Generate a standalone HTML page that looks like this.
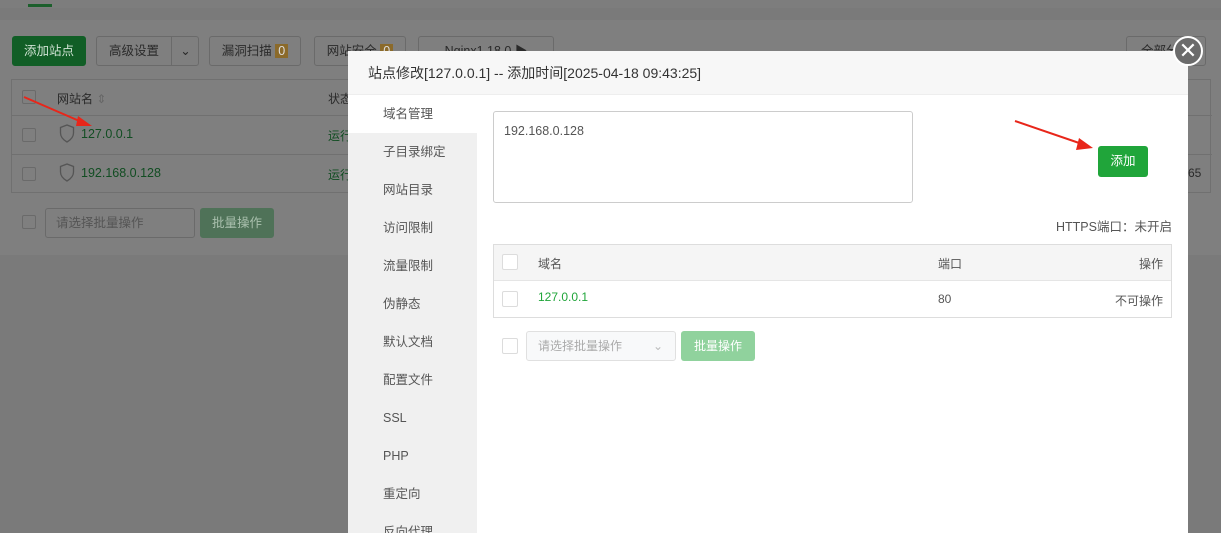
<!DOCTYPE html><html><head><meta charset="utf-8"><style>
*{box-sizing:border-box;margin:0;padding:0}
html{width:1221px;height:533px;overflow:hidden}
body{width:1221px;height:533px;overflow:hidden;background:#7a7a7a;font-family:"Liberation Sans","Noto Sans CJK SC",sans-serif;font-size:12px;position:relative}
.a{position:absolute}
.btn{position:absolute;border:1px solid #6a6a6a;border-radius:3px;background:#7f7f7f;color:#2a2a2a;font-size:12.5px;text-align:center;line-height:28px;height:30px}
.cb{position:absolute;width:14px;height:14px;border:1px solid #6a6a6a;border-radius:2px;background:#7f7f7f}
.mcb{position:absolute;width:16px;height:16px;border:1px solid #dcdcdc;border-radius:2px;background:#fff}
.side div{height:38px;line-height:38px;padding-left:35px;color:#555;font-size:12.5px}
</style></head><body>
<div class="a" style="left:0;top:0;width:1221px;height:8px;background:#7d7d7d"></div>
<div class="a" style="left:28px;top:4px;width:24px;height:3px;background:#1c5f2c"></div>
<div class="a" style="left:0;top:20px;width:1221px;height:235px;background:#7f7f7f"></div>
<div class="btn" style="left:12px;top:36px;width:74px;background:#115e26;border-color:#115e26;color:#cfe2d3">添加站点</div>
<div class="btn" style="left:96px;top:36px;width:103px;text-align:left;padding-left:12px">高级设置<span style="position:absolute;left:74px;top:0;height:28px;border-left:1px solid #6a6a6a;width:28px;text-align:center">⌄</span></div>
<div class="btn" style="left:209px;top:36px;width:92px">漏洞扫描 <span style="background:#8b6a2a;color:#ddd;padding:0 3px">0</span></div>
<div class="btn" style="left:314px;top:36px;width:92px">网站安全 <span style="background:#8b6a2a;color:#ddd;padding:0 3px">0</span></div>
<div class="btn" style="left:418px;top:36px;width:136px">Nginx1.18.0 ▶</div>
<div class="btn" style="left:1126px;top:36px;width:80px">全部分类</div>
<div class="a" style="left:11px;top:79px;width:1200px;height:114px;border:1px solid #707070"></div>
<div class="a" style="left:12px;top:115px;width:1200px;height:1px;background:#707070"></div>
<div class="a" style="left:12px;top:154px;width:1200px;height:1px;background:#707070"></div>
<div class="cb" style="left:22px;top:90px"></div><div class="cb" style="left:22px;top:128px"></div><div class="cb" style="left:22px;top:167px"></div>
<div class="a" style="left:57px;top:90px;color:#2a2a2a">网站名 <span style="color:#666">⇕</span></div>
<div class="a" style="left:328px;top:90px;color:#2a2a2a">状态</div>
<svg class="a" style="left:59px;top:124px" width="16" height="19"><path d="M8 1L1.5 3.5V9c0 4 3 7 6.5 9 3.5-2 6.5-5 6.5-9V3.5z" fill="none" stroke="#555" stroke-width="1.3"/></svg>
<div class="a" style="left:81px;top:127px;color:#114d22;font-size:12.5px">127.0.0.1</div>
<svg class="a" style="left:59px;top:163px" width="16" height="19"><path d="M8 1L1.5 3.5V9c0 4 3 7 6.5 9 3.5-2 6.5-5 6.5-9V3.5z" fill="none" stroke="#555" stroke-width="1.3"/></svg>
<div class="a" style="left:81px;top:166px;color:#114d22;font-size:12.5px">192.168.0.128</div>
<div class="a" style="left:328px;top:127px;color:#114d22">运行</div><div class="a" style="left:328px;top:166px;color:#114d22">运行</div>
<div class="a" style="left:1188px;top:166px;color:#2a2a2a">65</div>
<div class="cb" style="left:22px;top:215px"></div>
<div class="btn" style="left:45px;top:208px;width:150px;color:#555;text-align:left;padding-left:10px">请选择批量操作</div>
<div class="btn" style="left:200px;top:208px;width:74px;background:#4f7258;border-color:#4f7258;color:#aac0ae">批量操作</div>
<svg class="a" style="left:22px;top:95px" width="75" height="35"><line x1="2" y1="2" x2="62" y2="28" stroke="#e8261a" stroke-width="2"/><polygon points="56,21 70,31 54,31" fill="#e8261a"/></svg>

<div class="a" style="left:348px;top:51px;width:840px;height:482px;background:#fff;overflow:hidden">
<div class="a" style="left:0;top:0;width:840px;height:44px;background:#f7f7f7;border-bottom:1px solid #eee;padding-left:20px;line-height:44px;font-size:14px;color:#333">站点修改[127.0.0.1] -- 添加时间[2025-04-18 09:43:25]</div>
<div class="a side" style="left:0;top:44px;width:129px;height:438px;background:#f0f0f0">
<div style="background:#fff">域名管理</div><div>子目录绑定</div><div>网站目录</div><div>访问限制</div><div>流量限制</div><div>伪静态</div><div>默认文档</div><div>配置文件</div><div>SSL</div><div>PHP</div><div>重定向</div><div>反向代理</div></div>
<div class="a" style="left:145px;top:60px;width:420px;height:92px;border:1px solid #ccc;border-radius:3px;padding:12px 10px;color:#555;font-size:12.5px">192.168.0.128</div>
<div class="a" style="left:750px;top:95px;width:50px;height:31px;background:#20a53a;border-radius:3px;color:#fff;text-align:center;line-height:31px;font-size:12.5px">添加</div>
<svg class="a" style="left:665px;top:68px" width="85" height="35"><line x1="2" y1="2" x2="72" y2="26" stroke="#e8261a" stroke-width="2"/><polygon points="66,19 80,29 63,31" fill="#e8261a"/></svg>
<div class="a" style="left:708px;top:165px;color:#555;font-size:12.5px">HTTPS端口：未开启</div>
<div class="a" style="left:145px;top:193px;width:679px;height:74px;border:1px solid #ddd">
<div style="height:36px;background:#f5f5f5;border-bottom:1px solid #e5e5e5"></div></div>
<div class="mcb" style="left:154px;top:203px"></div><div class="mcb" style="left:154px;top:240px"></div>
<div class="a" style="left:190px;top:204px;color:#555">域名</div>
<div class="a" style="left:590px;top:204px;color:#555">端口</div>
<div class="a" style="left:791px;top:204px;color:#555">操作</div>
<div class="a" style="left:190px;top:239px;color:#20a53a">127.0.0.1</div>
<div class="a" style="left:590px;top:241px;color:#555">80</div>
<div class="a" style="left:767px;top:241px;color:#555">不可操作</div>
<div class="mcb" style="left:154px;top:287px"></div>
<div class="a" style="left:178px;top:280px;width:150px;height:30px;border:1px solid #e0e0e0;border-radius:3px;background:#f8f9fa;color:#aaa;line-height:28px;padding-left:11px">请选择批量操作<span style="position:absolute;right:12px;color:#bbb">⌄</span></div>
<div class="a" style="left:333px;top:280px;width:74px;height:30px;background:#90d29d;border-radius:3px;color:#fff;text-align:center;line-height:30px">批量操作</div>
</div>
<div class="a" style="left:1173px;top:36px;width:30px;height:30px;border-radius:50%;background:#6b6b6b;border:2px solid #fff;color:#fff;text-align:center;line-height:25px;font-size:22px">✕</div>
</body></html>
